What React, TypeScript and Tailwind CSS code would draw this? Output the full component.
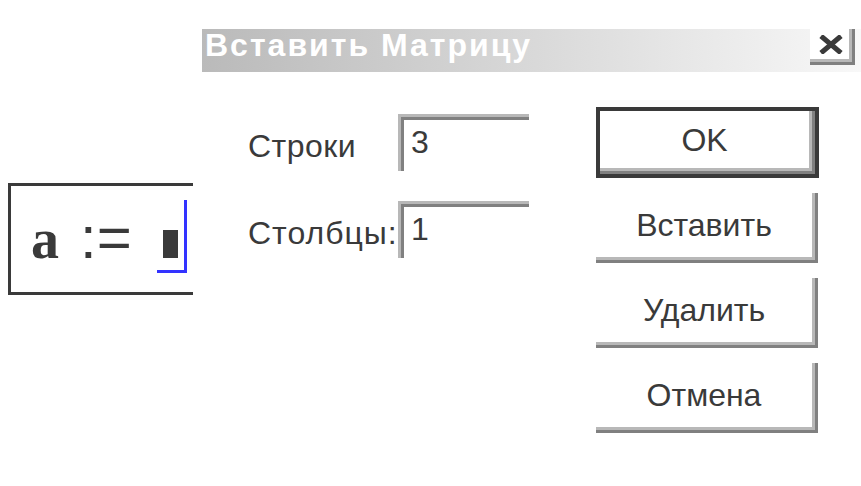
import type { ReactNode } from 'react';

const ui = { fontFamily: '"Liberation Sans", Arial, sans-serif' };

function EditField({ value }: { value: string }) {
  return (
    <div className="w-[131px] h-[57px] border-t-[3px] border-l-[3px] border-[#b8b8b8]">
      <div className="h-full border-t-[3px] border-l-[3px] border-[#808080] pl-[7px] pt-[2px] text-[32px] leading-[40px] text-[#3a3a3a]">
        {value}
      </div>
    </div>
  );
}

function DialogButton({ children, primary }: { children: ReactNode; primary?: boolean }) {
  const face = (
    <div className="h-full border-r-[3px] border-b-[3px] border-[#808080]">
      <div className="h-full flex items-center justify-center border-r-[3px] border-b-[3px] border-[#b8b8b8] text-[32px] text-[#3a3a3a]">
        {children}
      </div>
    </div>
  );
  if (primary) {
    return <div className="w-[223px] h-[71px] border-4 border-[#3a3a3a]">{face}</div>;
  }
  return <div className="w-[222px] h-[70px]">{face}</div>;
}

export default function App() {
  return (
    <div className="relative w-[861px] h-[486px] bg-white overflow-hidden" style={ui}>
      {/* worksheet region: a := [] */}
      <div className="absolute left-[8px] top-[183px] w-[185px] h-[112px] border-[3px] border-r-0 border-[#3a3a3a] overflow-hidden">
        <div className="flex items-baseline h-full pt-[22px]">
          <span
            className="inline-block ml-[20px] text-[56px] leading-none font-bold text-[#3a3a3a]"
            style={{ fontFamily: '"Liberation Serif", "Times New Roman", serif' }}
          >
            a
          </span>
          <span className="ml-[21px] text-[60px] leading-none text-[#3a3a3a]">:=</span>
          <span className="relative inline-block ml-[31px] w-[15px] h-[28px] bg-[#3a3a3a] -mb-[3px]">
            <span className="absolute -left-[6px] -top-[30px] w-[30px] h-[73px] border-r-[3px] border-b-[3px] border-[#3333ff]" />
          </span>
        </div>
      </div>

      {/* Insert matrix dialog */}
      <div className="absolute left-[202px] top-[29px] w-[659px] h-[457px] flex flex-col">
        <div className="h-[43px] flex items-start justify-between bg-gradient-to-r from-[#bababa] to-[#f8f8f8]">
          <span className="pl-[3px] text-[32px] leading-[32px] font-bold text-white tracking-[2px]">
            Вставить Матрицу
          </span>
          <button className="mr-[6px] w-[45px] h-[36px] bg-white border-r-[3px] border-b-[3px] border-[#808080]">
            <div className="h-full flex items-center justify-center pl-[3px] border-r-[3px] border-b-[3px] border-[#b8b8b8]">
              <svg width="24" height="19" viewBox="0 0 24 19">
                <path d="M2 1 L22 18 M22 1 L2 18" stroke="#3a3a3a" strokeWidth="5" />
              </svg>
            </div>
          </button>
        </div>

        <div className="flex">
          <div className="ml-[46px] pt-[42px] flex flex-col gap-[30px]">
            <div className="flex items-start">
              <span className="w-[150px] pt-[12px] text-[32px] leading-[40px] text-[#3a3a3a] whitespace-nowrap tracking-[0.5px]">
                Строки
              </span>
              <EditField value="3" />
            </div>
            <div className="flex items-start">
              <span className="w-[150px] pt-[12px] text-[32px] leading-[40px] text-[#3a3a3a] whitespace-nowrap tracking-[1px]">
                Столбцы:
              </span>
              <EditField value="1" />
            </div>
          </div>

          <div className="ml-[67px] pt-[35px] flex flex-col gap-[15px]">
            <DialogButton primary>OK</DialogButton>
            <DialogButton>Вставить</DialogButton>
            <DialogButton>Удалить</DialogButton>
            <DialogButton>Отмена</DialogButton>
          </div>
        </div>
      </div>
    </div>
  );
}
